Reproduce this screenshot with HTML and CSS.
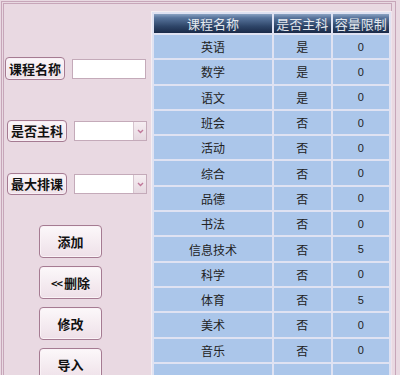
FILE: index.html
```html
<!DOCTYPE html>
<html>
<head>
<meta charset="utf-8">
<link rel="stylesheet" href="styles.css">
</head>
<body>
<div class="outer">
  <div class="inner">
    <div class="left">
      <div class="field field-1">
        <div class="label">课程名称</div>
        <div class="textbox"></div>
      </div>
      <div class="field field-2">
        <div class="label">是否主科</div>
        <div class="select"><span class="arrow"><svg width="7" height="5" viewBox="0 0 7 5"><path d="M1 1 L3.5 3.5 L6 1" fill="none" stroke="#c0789a" stroke-width="1.4"/></svg></span></div>
      </div>
      <div class="field field-3">
        <div class="label">最大排课</div>
        <div class="select"><span class="arrow"><svg width="7" height="5" viewBox="0 0 7 5"><path d="M1 1 L3.5 3.5 L6 1" fill="none" stroke="#c0789a" stroke-width="1.4"/></svg></span></div>
      </div>
      <div class="actions">
        <div class="btn">添加</div>
        <div class="btn"><span class="lt">&lt;&lt;</span>删除</div>
        <div class="btn">修改</div>
        <div class="btn">导入</div>
      </div>
    </div>
    <div class="grid-wrap">
      <table class="grid">
        <thead>
          <tr><th class="c1">课程名称</th><th class="c2">是否主科</th><th class="c3">容量限制</th></tr>
        </thead>
        <tbody>
          <tr><td>英语</td><td>是</td><td class="num">0</td></tr>
          <tr><td>数学</td><td>是</td><td class="num">0</td></tr>
          <tr><td>语文</td><td>是</td><td class="num">0</td></tr>
          <tr><td>班会</td><td>否</td><td class="num">0</td></tr>
          <tr><td>活动</td><td>否</td><td class="num">0</td></tr>
          <tr><td>综合</td><td>否</td><td class="num">0</td></tr>
          <tr><td>品德</td><td>否</td><td class="num">0</td></tr>
          <tr><td>书法</td><td>否</td><td class="num">0</td></tr>
          <tr><td>信息技术</td><td>否</td><td class="num">5</td></tr>
          <tr><td>科学</td><td>否</td><td class="num">0</td></tr>
          <tr><td>体育</td><td>否</td><td class="num">5</td></tr>
          <tr><td>美术</td><td>否</td><td class="num">0</td></tr>
          <tr><td>音乐</td><td>否</td><td class="num">0</td></tr>
          <tr><td></td><td></td><td class="num"></td></tr>
        </tbody>
      </table>
    </div>
  </div>
</div>
</body>
</html>
```

FILE: styles.css
```css
html, body {
  margin: 0;
  padding: 0;
}
body {
  width: 400px;
  height: 375px;
  overflow: hidden;
  background: #e9d9e2;
  font-family: "Noto Sans CJK SC", "Liberation Sans", sans-serif;
}
.outer {
  margin: 1px 0 0 1px;
  width: 395px;
  height: 374px;
  overflow: hidden;
  border: 1px solid #c7a6b9;
  border-bottom: none;
  padding: 1px 3px 0 1px;
  box-sizing: border-box;
}
.inner {
  border: 1px solid #c7a6b9;
  border-bottom: none;
  height: 380px;
  display: flex;
  align-items: flex-start;
}
.left {
  width: 147px;
  flex: none;
  display: flex;
  flex-direction: column;
}
.field {
  display: flex;
  align-items: center;
}
.field-1 {
  margin-top: 53px;
  padding-left: 1px;
}
.field-2 {
  margin-top: 40px;
  padding-left: 3px;
}
.field-3 {
  margin-top: 31px;
  padding-left: 3px;
}
.label {
  height: 20px;
  line-height: 20px;
  padding: 0 3px;
  border: 1px solid #a57b92;
  border-radius: 4px;
  background: linear-gradient(#fbf6f9, #efe2e9);
  box-shadow: inset 0 0 0 1px #f8eef4;
  font-weight: 700;
  font-size: 13px;
  color: #111;
  white-space: nowrap;
}
.field-1 .label { height: 21px; line-height: 21px; }
.textbox {
  margin-left: 7px;
  width: 72px;
  height: 18px;
  background: #fff;
  border: 1px solid #c4aab9;
}
.select {
  margin-left: 7px;
  width: 71px;
  height: 18px;
  background: #fff;
  border: 1px solid #c4aab9;
  display: flex;
  justify-content: flex-end;
}
.arrow {
  width: 12px;
  height: 18px;
  background: linear-gradient(#f6eef2, #e6d8e0);
  border-left: 1px solid #d6c4ce;
  display: flex;
  align-items: center;
  justify-content: center;
}
.actions {
  margin-top: 30px;
  margin-left: 35px;
  display: flex;
  flex-direction: column;
  gap: 8px;
}
.btn {
  width: 61px;
  height: 31px;
  border: 1px solid #a57b92;
  border-radius: 4px;
  background: linear-gradient(#fcf8fa, #eee0e8);
  box-shadow: inset 0 0 0 1px #faf2f6;
  display: flex;
  align-items: center;
  justify-content: center;
  font-weight: 700;
  font-size: 13px;
  color: #111;
}
.lt {
  font-size: 11px;
  letter-spacing: -1px;
  margin-right: 2px;
}
.grid-wrap {
  flex: none;
  margin-top: 7px;
  border: 1px solid #f5eef2;
  border-right-color: #f0e4ec;
  background: #dfe2f2;
}
.grid {
  border-collapse: separate;
  border-spacing: 2px;
  background: #dfe2f2;
  font-size: 12px;
  table-layout: fixed;
  width: 239px;
}
.grid th {
  height: 18px;
  padding: 0;
  font-weight: 400;
  font-size: 13px;
  color: #e4e8ee;
  background: linear-gradient(#8aa2c2 0%, #58749c 20%, #2e4568 65%, #1a2a48 100%);
  text-align: center;
  white-space: nowrap;
  overflow: hidden;
}
.grid .c1 { width: 117px; }
.grid .c2 { width: 56px; }
.grid .c3 { width: 56px; }
.grid td {
  height: 23.3px;
  padding: 0;
  background: #abc6ea;
  color: #222;
  text-align: center;
}
.grid td.num {
  font-family: "Liberation Sans", sans-serif;
  font-size: 11px;
}
```
